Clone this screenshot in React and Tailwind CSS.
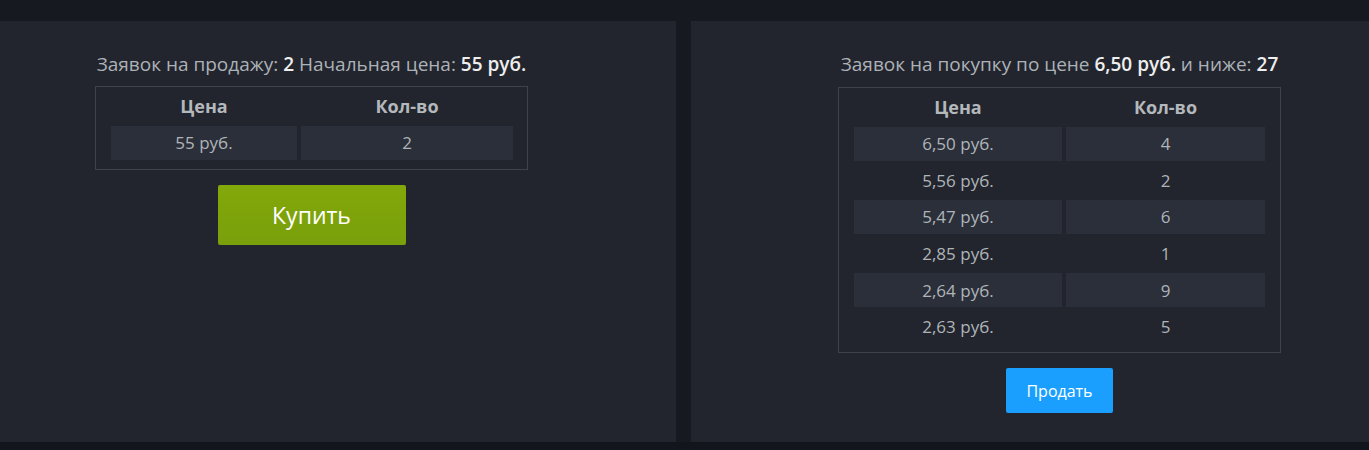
import React from "react";

const font = { fontFamily: '"Open Sans", "Noto Sans", sans-serif' };

function Row({ a, b, striped }) {
  const bg = striped ? "bg-[#2b2f39]" : "";
  return (
    <>
      <div className={`h-[34px] flex items-center justify-center ${bg}`}>{a}</div>
      <div className={`h-[34px] flex items-center justify-center ${bg}`}>{b}</div>
    </>
  );
}

export default function App() {
  const buy = [
    ["6,50 руб.", "4"],
    ["5,56 руб.", "2"],
    ["5,47 руб.", "6"],
    ["2,85 руб.", "1"],
    ["2,64 руб.", "9"],
    ["2,63 руб.", "5"],
  ];
  return (
    <div className="w-[1369px] h-[450px] bg-[#161920] pt-[21px] flex flex-col" style={font}>
      <div className="flex gap-[15px] h-[421px]">
        {/* Left panel */}
        <div className="w-[676px] bg-[#22252d] pl-[95px] pt-[30px]">
          <div className="w-[433px] flex flex-col items-center">
            <div className="text-[19px] text-[#acb2b8] leading-[26px] whitespace-nowrap">
              Заявок на продажу: <span className="font-semibold text-[#eeeeee]">2</span> Начальная цена: <span className="font-semibold text-[#eeeeee]">55 руб.</span>
            </div>
            <div className="mt-[9px] w-[433px] border border-[#3e424a] px-[15px] pt-[6px] pb-[9px]">
              <div className="grid grid-cols-[186px_212px] gap-x-[4px] gap-y-[3px] text-[17px] text-[#afb4b9]">
                <div className="h-[30px] pb-[4px] flex items-center justify-center font-bold text-[18px] text-[#b4b8bc]">Цена</div>
                <div className="h-[30px] pb-[4px] flex items-center justify-center font-bold text-[18px] text-[#b4b8bc]">Кол-во</div>
                <Row a="55 руб." b="2" striped />
              </div>
            </div>
            <button className="mt-[15px] w-[188px] h-[60px] rounded-[2px] bg-gradient-to-b from-[#83a80a] to-[#799f0b] text-white text-[23px] flex items-center justify-center">
              Купить
            </button>
          </div>
        </div>
        {/* Right panel */}
        <div className="flex-1 bg-[#22252d] pl-[147px] pt-[30px]">
          <div className="w-[443px] flex flex-col items-center">
            <div className="text-[19px] text-[#acb2b8] leading-[26px] whitespace-nowrap">
              Заявок на покупку по цене <span className="font-semibold text-[#eeeeee]">6,50 руб.</span> и ниже: <span className="font-semibold text-[#eeeeee]">27</span>
            </div>
            <div className="mt-[10px] w-[443px] border border-[#3e424a] px-[15px] pt-[6px] pb-[8px]">
              <div className="grid grid-cols-[208px_199px] gap-x-[4px] gap-y-[2.7px] text-[17px] text-[#afb4b9]">
                <div className="h-[30px] pb-[4px] flex items-center justify-center font-bold text-[18px] text-[#b4b8bc]">Цена</div>
                <div className="h-[30px] pb-[4px] flex items-center justify-center font-bold text-[18px] text-[#b4b8bc]">Кол-во</div>
                {buy.map((r, i) => (
                  <Row key={i} a={r[0]} b={r[1]} striped={i % 2 === 0} />
                ))}
              </div>
            </div>
            <button className="mt-[15px] w-[107px] h-[45px] rounded-[2px] bg-[#1a9fff] text-white text-[16px] flex items-center justify-center">
              Продать
            </button>
          </div>
        </div>
      </div>
      <div className="flex-1 bg-[#12151b]"></div>
    </div>
  );
}
